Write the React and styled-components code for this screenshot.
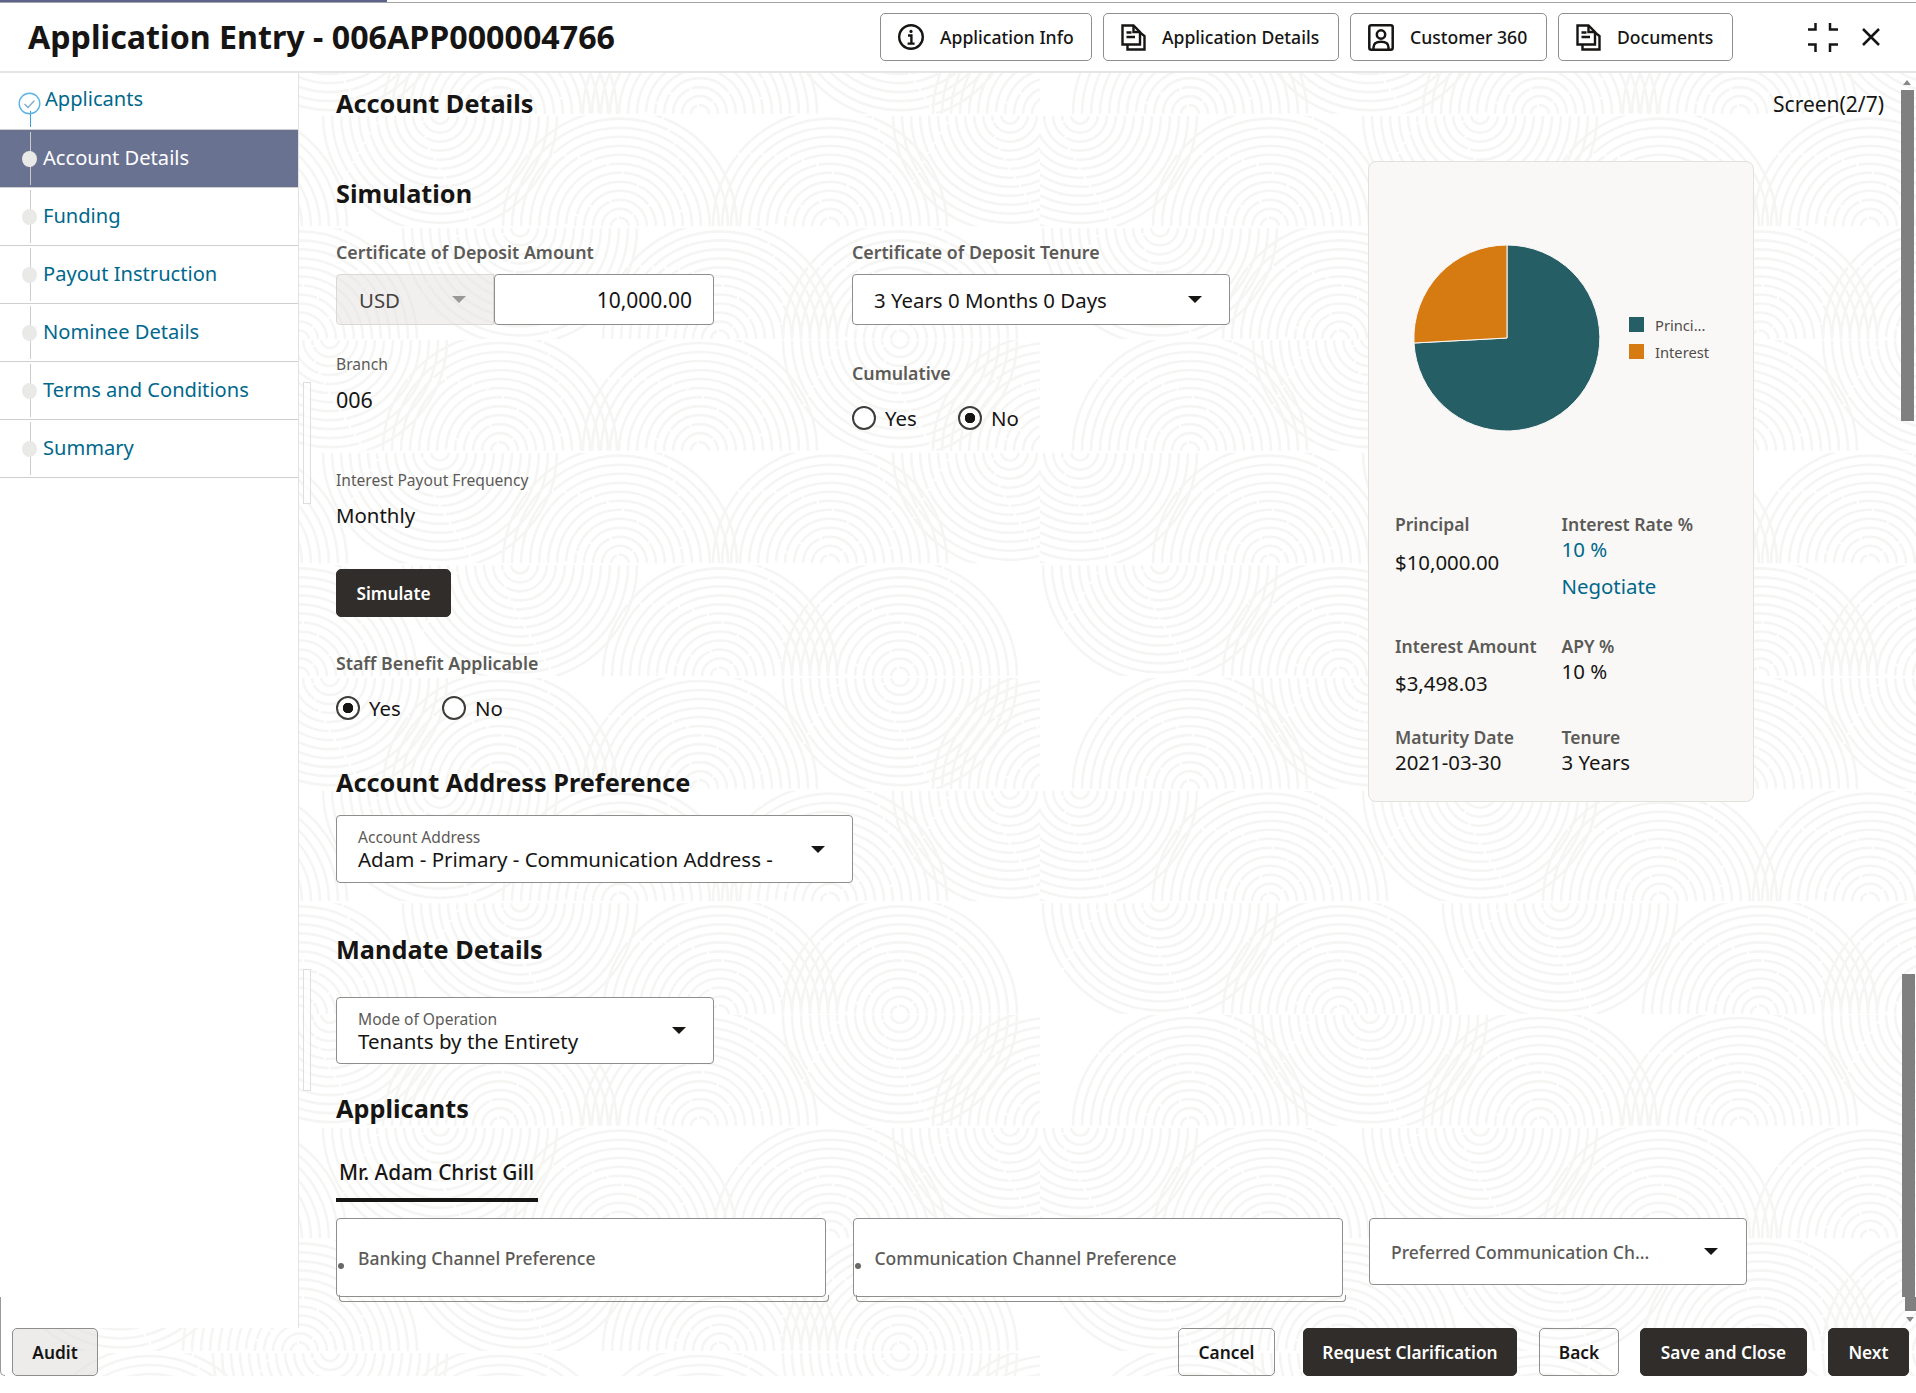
import React from "react";
import styled, { createGlobalStyle } from "styled-components";

// faint fingerprint wallpaper, built once from rings cut into rows
const buildWallpaper = () => {
  const rowH = 112.5;
  const rows = [
    [[150, 112], [330, 0], [500, 112], [700, 112], [900, 0], [1050, 112]],
    [[40, 0], [230, 112], [440, 0], [620, 112], [830, 112], [1010, 0]],
    [[120, 0], [300, 112], [520, 0], [720, 112], [900, 112]],
  ];
  let defs = "";
  let body = "";
  rows.forEach((row, i) => {
    const y = i * rowH;
    defs += `<clipPath id="r${i}"><rect x="0" y="${y + 1}" width="1040" height="${rowH - 2}"/></clipPath>`;
    let rings = "";
    row.forEach(([cx, cy]) => {
      for (let r = 9; r <= 117; r += 9) {
        rings += `<circle cx="${cx}" cy="${cy + y}" r="${r}" stroke-dasharray="${30 + r} 2"/>`;
      }
    });
    body += `<g clip-path="url(#r${i})">${rings}</g>`;
  });
  const svg = `<svg xmlns="http://www.w3.org/2000/svg" width="1040" height="${rowH * 3}"><defs>${defs}</defs><g fill="none" stroke="#f5f5f4" stroke-width="2.6">${body}</g></svg>`;
  return `url("data:image/svg+xml,${encodeURIComponent(svg)}")`;
};
const wallpaper = buildWallpaper();

const GlobalStyle = createGlobalStyle`
  html, body {
    margin: 0;
    padding: 0;
    background: #fff;
  }
  * {
    box-sizing: border-box;
  }
  body {
    font-family: "Noto Sans", "Open Sans", sans-serif;
    color: #161513;
  }
`;

const Page = styled.div`
  position: relative;
  width: 1916px;
  height: 1393px;
  display: flex;
  flex-direction: column;
  overflow: hidden;
  background: #fff;
`;
const Progress = styled.div`
  height: 3px;
  border-bottom: 1px solid #a5a5a5;
  flex: none;
  div {
    width: 387px;
    height: 2px;
    background: #5b6488;
  }
`;
const Header = styled.header`
  height: 70px;
  flex: none;
  display: flex;
  align-items: center;
  padding: 0 36px 0 28px;
  border-bottom: 2px solid #e6e6e6;
`;
const PageTitle = styled.h1`
  margin: 0;
  font-size: 32.2px;
  font-weight: 700;
  line-height: 44px;
  color: #161513;
  white-space: nowrap;
`;
const HeaderActions = styled.div`
  margin-left: auto;
  display: flex;
  align-items: center;
  gap: 11px;
`;
const HeaderButton = styled.button`
  width: ${(p) => p.$w}px;
  height: 48px;
  display: flex;
  align-items: center;
  gap: 16px;
  padding: 0 0 0 17px;
  background: #fff;
  border: 1px solid #8f8e8c;
  border-radius: 5px;
  font-family: inherit;
  font-size: 17.6px;
  font-weight: 500;
  color: #161513;
  white-space: nowrap;
`;
const WindowIcons = styled.div`
  margin-left: 75px;
  display: flex;
  align-items: center;
  gap: 24px;
`;
const IconSvg = styled.svg`
  flex: none;
  display: block;
  fill: none;
  stroke: #161513;
  stroke-width: ${(p) => p.$stroke || 2.4};
`;

const Workspace = styled.div`
  flex: 1;
  min-height: 0;
  display: flex;
  flex-direction: column;
  background-color: #fff;
  background-image: ${wallpaper};
  background-position: 0 -71px;
`;
const Body = styled.div`
  flex: 1;
  min-height: 0;
  display: flex;
`;
const Sidebar = styled.nav`
  width: 299px;
  flex: none;
  background: #fff;
  border-right: 1px solid #e2e2e2;
`;
const Step = styled.div`
  position: relative;
  height: ${(p) => (p.$first ? 57 : 58)}px;
  display: flex;
  align-items: center;
  padding-bottom: 2px;
  border-bottom: 1px solid #cfcfcf;
  background: ${(p) => (p.$active ? "#6a7292" : "transparent")};
  color: ${(p) => (p.$active ? "#fff" : "#00688c")};
  font-size: 20.1px;
  &::before {
    content: "";
    position: absolute;
    left: 30px;
    top: ${(p) => (p.$first ? 38 : 2)}px;
    bottom: 2px;
    width: 1px;
    background: ${(p) => (p.$first ? "#3b9fd8" : "#cccccc")};
  }
`;
const StepDot = styled.span`
  position: relative;
  width: 15px;
  height: 16px;
  margin: 2px 6px 0 22px;
  border-radius: 50%;
  background: #e9e9e8;
  flex: none;
`;
const DoneIcon = styled.svg`
  position: relative;
  flex: none;
  width: 23px;
  height: 23px;
  margin: 6px 4px 0 18px;
  fill: none;
`;
const DoneLabel = styled.span`
  margin-top: -4px;
`;

const Main = styled.main`
  flex: 1;
  min-width: 0;
  padding-left: 37px;
  overflow: hidden;
`;
const TopGrid = styled.div`
  display: grid;
  grid-template-columns: 1032px 516px;
`;
const SectionTitle = styled.h2`
  margin: ${(p) => p.$top || 0}px 0 0;
  font-size: 25.3px;
  line-height: 36px;
  font-weight: 700;
  color: #161513;
`;
const SimulationGrid = styled.div`
  display: grid;
  grid-template-columns: 516px 516px;
  margin-top: 29px;
`;
const FieldLabel = styled.div`
  margin-top: ${(p) => p.$top || 0}px;
  font-size: 17.75px;
  line-height: 24px;
  font-weight: 600;
  color: #5c5a57;
`;
const SmallLabel = styled.div`
  margin-top: ${(p) => p.$top || 0}px;
  font-size: 15.6px;
  line-height: 22px;
  color: #5c5a57;
`;
const Value = styled.div`
  margin-top: ${(p) => p.$top || 0}px;
  font-size: ${(p) => p.$size || 20.4}px;
  line-height: 28px;
  color: #161513;
`;
const AmountRow = styled.div`
  display: flex;
  margin-top: 10px;
  height: 51px;
`;
const CurrencySelect = styled.div`
  width: 158px;
  display: flex;
  align-items: center;
  justify-content: space-between;
  padding: 0 27px 0 22px;
  background: rgba(228, 226, 223, 0.5);
  border: 1px solid #dad8d5;
  border-radius: 4px 0 0 4px;
  font-size: 20.4px;
  color: #45423f;
`;
const AmountInput = styled.div`
  width: 220px;
  display: flex;
  align-items: center;
  justify-content: flex-end;
  padding-right: 21px;
  background: #fff;
  border: 1px solid #8f8e8c;
  border-radius: 4px;
  font-size: 21px;
`;
const Caret = styled.span`
  flex: none;
  width: 0;
  height: 0;
  border-left: 7px solid transparent;
  border-right: 7px solid transparent;
  border-top: 7px solid ${(p) => p.$color || "#161513"};
`;
const SelectBox = styled.div`
  width: ${(p) => p.$w}px;
  height: ${(p) => p.$h}px;
  margin-top: ${(p) => p.$top || 0}px;
  display: flex;
  align-items: center;
  justify-content: space-between;
  padding: 0 27px 0 21px;
  background: #fff;
  border: 1px solid #8f8e8c;
  border-radius: 4px;
  font-size: 20.4px;
`;
const FloatField = styled.div`
  display: flex;
  flex-direction: column;
  span:first-child {
    font-size: 15.6px;
    line-height: 20px;
    color: #5c5a57;
  }
  span:last-child {
    font-size: 20.5px;
    line-height: 24px;
    color: #161513;
    white-space: nowrap;
  }
`;
const RadioRow = styled.div`
  display: flex;
  align-items: center;
  height: 24px;
  margin-top: ${(p) => p.$top || 0}px;
`;
const RadioOption = styled.label`
  display: flex;
  align-items: center;
  width: ${(p) => p.$w}px;
  gap: 9px;
  font-size: 20.4px;
  &::before {
    content: "";
    width: 20px;
    height: 20px;
    flex: none;
    border-radius: 50%;
    border: 2px solid #3f3d3b;
    background: ${(p) =>
      p.$on
        ? "radial-gradient(circle, #161513 0 5px, #fff 5.5px)"
        : "#fff"};
  }
`;
const DarkButton = styled.button`
  width: ${(p) => p.$w}px;
  height: ${(p) => p.$h || 48}px;
  margin-top: ${(p) => p.$top || 0}px;
  margin-left: ${(p) => p.$left || 0}px;
  padding: 0;
  background: #312d2a;
  border: 1px solid #312d2a;
  border-radius: 5px;
  font-family: inherit;
  font-size: 17.3px;
  font-weight: 600;
  color: #fff;
  white-space: nowrap;
`;
const LightButton = styled(DarkButton)`
  background: transparent;
  border-color: #8f8e8c;
  color: #161513;
`;
const AuditButton = styled(LightButton)`
  background: rgba(225, 224, 221, 0.6);
`;

const ScreenCount = styled.div`
  margin-top: 13px;
  line-height: 36px;
  font-size: 21px;
  text-align: right;
`;
const SummaryCard = styled.aside`
  width: 386px;
  height: 641px;
  margin-top: 39px;
  padding: 83px 0 0 26px;
  background: #f9f8f6;
  border: 1px solid #e2e1de;
  border-radius: 8px;
`;
const ChartRow = styled.div`
  display: flex;
  align-items: center;
  margin-left: 19px;
  height: 186px;
`;
const Legend = styled.ul`
  list-style: none;
  margin: 0 0 0 29px;
  padding: 0;
  display: flex;
  flex-direction: column;
  gap: 5px;
  font-size: 14.7px;
  line-height: 22px;
  color: #4f4d4a;
`;
const LegendItem = styled.li`
  display: flex;
  align-items: center;
  gap: 11px;
  &::before {
    content: "";
    width: 15px;
    height: 15px;
    background: ${(p) => p.$color};
  }
`;
const StatsGrid = styled.div`
  display: grid;
  grid-template-columns: 166.5px 1fr;
  grid-template-rows: 122px 91px auto;
  margin-top: 81px;
`;
const StatLabel = styled.div`
  font-size: 17.5px;
  line-height: 24px;
  font-weight: 600;
  color: #5c5a57;
  white-space: nowrap;
`;
const StatValue = styled.div`
  margin-top: ${(p) => p.$top || 1}px;
  font-size: 20.4px;
  line-height: 25px;
  color: ${(p) => (p.$link ? "#00688c" : "#161513")};
`;

const TabLabel = styled.div`
  width: 202px;
  height: 44px;
  margin-top: 32px;
  padding-left: 3px;
  font-size: 20.8px;
  line-height: 28px;
  font-weight: 500;
  border-bottom: 4px solid #161513;
  white-space: nowrap;
`;
const ChannelGrid = styled.div`
  display: grid;
  grid-template-columns: 490px 490px 378px;
  column-gap: 26.5px;
  margin-top: 16px;
  align-items: start;
`;
const ChannelBox = styled.div`
  position: relative;
  height: 79px;
  display: flex;
  align-items: center;
  padding-left: 21px;
  background: #fff;
  border: 1px solid #8f8e8c;
  border-radius: 4px;
  font-size: 17.5px;
  font-weight: 500;
  color: #5c5a57;
  &::before {
    content: "";
    position: absolute;
    left: 1px;
    top: 44px;
    width: 6px;
    height: 6px;
    border-radius: 50%;
    background: #6a6866;
  }
  &::after {
    content: "";
    position: absolute;
    left: 2px;
    right: -4px;
    bottom: -6px;
    height: 6px;
    border: 1px solid #8f8e8c;
    border-top: 0;
    border-radius: 0 0 4px 4px;
  }
`;
const ChannelSelect = styled.div`
  height: 67px;
  display: flex;
  align-items: center;
  justify-content: space-between;
  padding: 0 28px 0 21px;
  background: #fff;
  border: 1px solid #8f8e8c;
  border-radius: 4px;
  font-size: 17.5px;
  font-weight: 500;
  color: #5c5a57;
`;

const Footer = styled.footer`
  height: 48px;
  flex: none;
  display: flex;
  padding: 0 7px 0 12px;
`;
const FooterRight = styled.div`
  margin-left: auto;
  display: flex;
`;
const BlankStrip = styled.div`
  height: 17px;
  flex: none;
  background: #fff;
`;

// thin handles and scrollbars that sit over the page
const SideHandle = styled.div`
  position: absolute;
  left: 303px;
  top: ${(p) => p.$top}px;
  width: 8px;
  height: 122px;
  border: 1px solid #dedede;
  background: rgba(255, 255, 255, 0.7);
`;
const ScrollThumb = styled.div`
  position: absolute;
  left: ${(p) => p.$left}px;
  top: ${(p) => p.$top}px;
  width: ${(p) => p.$w || 13}px;
  height: ${(p) => p.$h}px;
  background: #808080;
`;
const ScrollArrow = styled.div`
  position: absolute;
  left: ${(p) => p.$left}px;
  top: ${(p) => p.$top}px;
  width: 0;
  height: 0;
  border-left: 4px solid transparent;
  border-right: 4px solid transparent;
  ${(p) => (p.$down ? "border-top: 5px solid #888;" : "border-bottom: 5px solid #888;")}
`;
const CornerEdge = styled.div`
  position: absolute;
  left: 0;
  top: 1297px;
  width: 5px;
  height: 79px;
  border-left: 1px solid #9a9a9a;
  border-bottom: 1px solid #9a9a9a;
  border-radius: 0 0 0 5px;
`;

const InfoIcon = () => (
  <IconSvg width="26" height="26" viewBox="0 0 26 26">
    <circle cx="13" cy="13" r="11.8" />
    <circle cx="13" cy="7.4" r="1.6" fill="#161513" stroke="none" />
    <path d="M10 11.5h3.4v8M9.6 19.6h7" />
  </IconSvg>
);

const DocIcon = () => (
  <IconSvg width="25" height="27" viewBox="0 0 25 27">
    <path d="M1.5 1.5H12.5L19 8V20.5H1.5Z" />
    <path d="M12.5 1.5V8H19M19 8.5L23.5 12V25.5H6.5V20.5" />
    <path d="M5.5 8.5H10.5M5.5 13H14" />
  </IconSvg>
);

const PersonIcon = () => (
  <IconSvg width="26" height="27" viewBox="0 0 26 27" $stroke={2.5}>
    <rect x="1.3" y="1.3" width="23.4" height="24.4" rx="2" />
    <circle cx="13" cy="10.5" r="4.2" />
    <path d="M5.5 25V23.5C5.5 19.5 9 17.8 13 17.8S20.5 19.5 20.5 23.5V25" />
  </IconSvg>
);

const steps = ["Account Details", "Funding", "Payout Instruction", "Nominee Details", "Terms and Conditions", "Summary"];

export default function App() {
  return (
    <Page>
      <GlobalStyle />
      <Progress>
        <div />
      </Progress>
      <Header>
        <PageTitle>Application Entry - 006APP000004766</PageTitle>
        <HeaderActions>
          <HeaderButton $w={212}>
            <InfoIcon />
            Application Info
          </HeaderButton>
          <HeaderButton $w={236}>
            <DocIcon />
            Application Details
          </HeaderButton>
          <HeaderButton $w={197}>
            <PersonIcon />
            Customer 360
          </HeaderButton>
          <HeaderButton $w={175}>
            <DocIcon />
            Documents
          </HeaderButton>
        </HeaderActions>
        <WindowIcons>
          <IconSvg width="30" height="29" viewBox="0 0 30 29" $stroke={2.5}>
            <path d="M0 6.5H7.5V0M22 0V6.5H30M0 21.5H7.5V29M22 29V21.5H30" />
          </IconSvg>
          <IconSvg width="18" height="18" viewBox="0 0 18 18" $stroke={2.5}>
            <path d="M1 1L17 17M17 1L1 17" />
          </IconSvg>
        </WindowIcons>
      </Header>
      <Workspace>
        <Body>
          <Sidebar>
            <Step $first>
              <DoneIcon viewBox="0 0 23 23">
                <circle cx="11.5" cy="11.5" r="10.3" stroke="#5fb3e6" strokeWidth="1.4" />
                <path d="M6.5 12L10 15.5L16.5 8.5" stroke="#7fa9c9" strokeWidth="1.3" />
              </DoneIcon>
              <DoneLabel>Applicants</DoneLabel>
            </Step>
            {steps.map((name, i) => (
              <Step key={name} $active={i === 0}>
                <StepDot />
                {name}
              </Step>
            ))}
          </Sidebar>
          <Main>
            <TopGrid>
              <div>
                <SectionTitle $top={12}>Account Details</SectionTitle>
                <SectionTitle $top={54}>Simulation</SectionTitle>
                <SimulationGrid>
                  <div>
                    <FieldLabel>Certificate of Deposit Amount</FieldLabel>
                    <AmountRow>
                      <CurrencySelect>
                        USD
                        <Caret $color="#9a9896" />
                      </CurrencySelect>
                      <AmountInput>10,000.00</AmountInput>
                    </AmountRow>
                    <SmallLabel $top={28}>Branch</SmallLabel>
                    <Value $top={11} $size={21.5}>
                      006
                    </Value>
                    <SmallLabel $top={55}>Interest Payout Frequency</SmallLabel>
                    <Value $top={10}>Monthly</Value>
                    <DarkButton $w={115} $top={40}>
                      Simulate
                    </DarkButton>
                    <FieldLabel $top={34}>Staff Benefit Applicable</FieldLabel>
                    <RadioRow $top={21}>
                      <RadioOption $w={106} $on>
                        Yes
                      </RadioOption>
                      <RadioOption $w={100}>No</RadioOption>
                    </RadioRow>
                  </div>
                  <div>
                    <FieldLabel>Certificate of Deposit Tenure</FieldLabel>
                    <SelectBox $w={378} $h={51} $top={10}>
                      3 Years 0 Months 0 Days
                      <Caret />
                    </SelectBox>
                    <FieldLabel $top={36}>Cumulative</FieldLabel>
                    <RadioRow $top={21}>
                      <RadioOption $w={106}>Yes</RadioOption>
                      <RadioOption $on $w={100}>
                        No
                      </RadioOption>
                    </RadioRow>
                  </div>
                </SimulationGrid>
                <SectionTitle $top={44}>Account Address Preference</SectionTitle>
                <SelectBox $w={517} $h={68} $top={15}>
                  <FloatField>
                    <span>Account Address</span>
                    <span>Adam - Primary - Communication Address -</span>
                  </FloatField>
                  <Caret />
                </SelectBox>
                <SectionTitle $top={48}>Mandate Details</SectionTitle>
                <SelectBox $w={378} $h={67} $top={30}>
                  <FloatField>
                    <span>Mode of Operation</span>
                    <span>Tenants by the Entirety</span>
                  </FloatField>
                  <Caret />
                </SelectBox>
              </div>
              <div>
                <ScreenCount>Screen(2/7)</ScreenCount>
                <SummaryCard>
                  <ChartRow>
                    <svg width="186" height="186" viewBox="0 0 186 186">
                      <path d="M93 93V0A93 93 0 1 1 0 98Z" fill="#265e66" stroke="#f9f8f6" />
                      <path d="M93 93V0A93 93 0 0 0 0 98Z" fill="#d67a12" stroke="#f9f8f6" />
                    </svg>
                    <Legend>
                      <LegendItem $color="#265e66">Princi...</LegendItem>
                      <LegendItem $color="#d67a12">Interest</LegendItem>
                    </Legend>
                  </ChartRow>
                  <StatsGrid>
                    <div>
                      <StatLabel>Principal</StatLabel>
                      <StatValue $top={14}>$10,000.00</StatValue>
                    </div>
                    <div>
                      <StatLabel>Interest Rate %</StatLabel>
                      <StatValue $link>10 %</StatValue>
                      <StatValue $link $top={12}>
                        Negotiate
                      </StatValue>
                    </div>
                    <div>
                      <StatLabel>Interest Amount</StatLabel>
                      <StatValue $top={13}>$3,498.03</StatValue>
                    </div>
                    <div>
                      <StatLabel>APY %</StatLabel>
                      <StatValue>10 %</StatValue>
                    </div>
                    <div>
                      <StatLabel>Maturity Date</StatLabel>
                      <StatValue>2021-03-30</StatValue>
                    </div>
                    <div>
                      <StatLabel>Tenure</StatLabel>
                      <StatValue>3 Years</StatValue>
                    </div>
                  </StatsGrid>
                </SummaryCard>
              </div>
            </TopGrid>
            <SectionTitle $top={26}>Applicants</SectionTitle>
            <TabLabel>Mr. Adam Christ Gill</TabLabel>
            <ChannelGrid>
              <ChannelBox>Banking Channel Preference</ChannelBox>
              <ChannelBox>Communication Channel Preference</ChannelBox>
              <ChannelSelect>
                Preferred Communication Ch...
                <Caret />
              </ChannelSelect>
            </ChannelGrid>
          </Main>
        </Body>
        <Footer>
          <AuditButton $w={86}>Audit</AuditButton>
          <FooterRight>
            <LightButton $w={97}>Cancel</LightButton>
            <DarkButton $w={214} $left={28}>
              Request Clarification
            </DarkButton>
            <LightButton $w={80} $left={22}>
              Back
            </LightButton>
            <DarkButton $w={167} $left={21}>
              Save and Close
            </DarkButton>
            <DarkButton $w={81} $left={21}>
              Next
            </DarkButton>
          </FooterRight>
        </Footer>
      </Workspace>
      <BlankStrip />
      <SideHandle $top={382} />
      <SideHandle $top={969} />
      <ScrollArrow $left={1903} $top={80} />
      <ScrollThumb $left={1901} $top={90} $h={331} />
      <ScrollThumb $left={1902} $top={974} $h={323} />
      <ScrollThumb $left={1905} $top={1297} $w={11} $h={14} />
      <ScrollArrow $left={1906} $top={1317} $down />
      <CornerEdge />
    </Page>
  );
}
